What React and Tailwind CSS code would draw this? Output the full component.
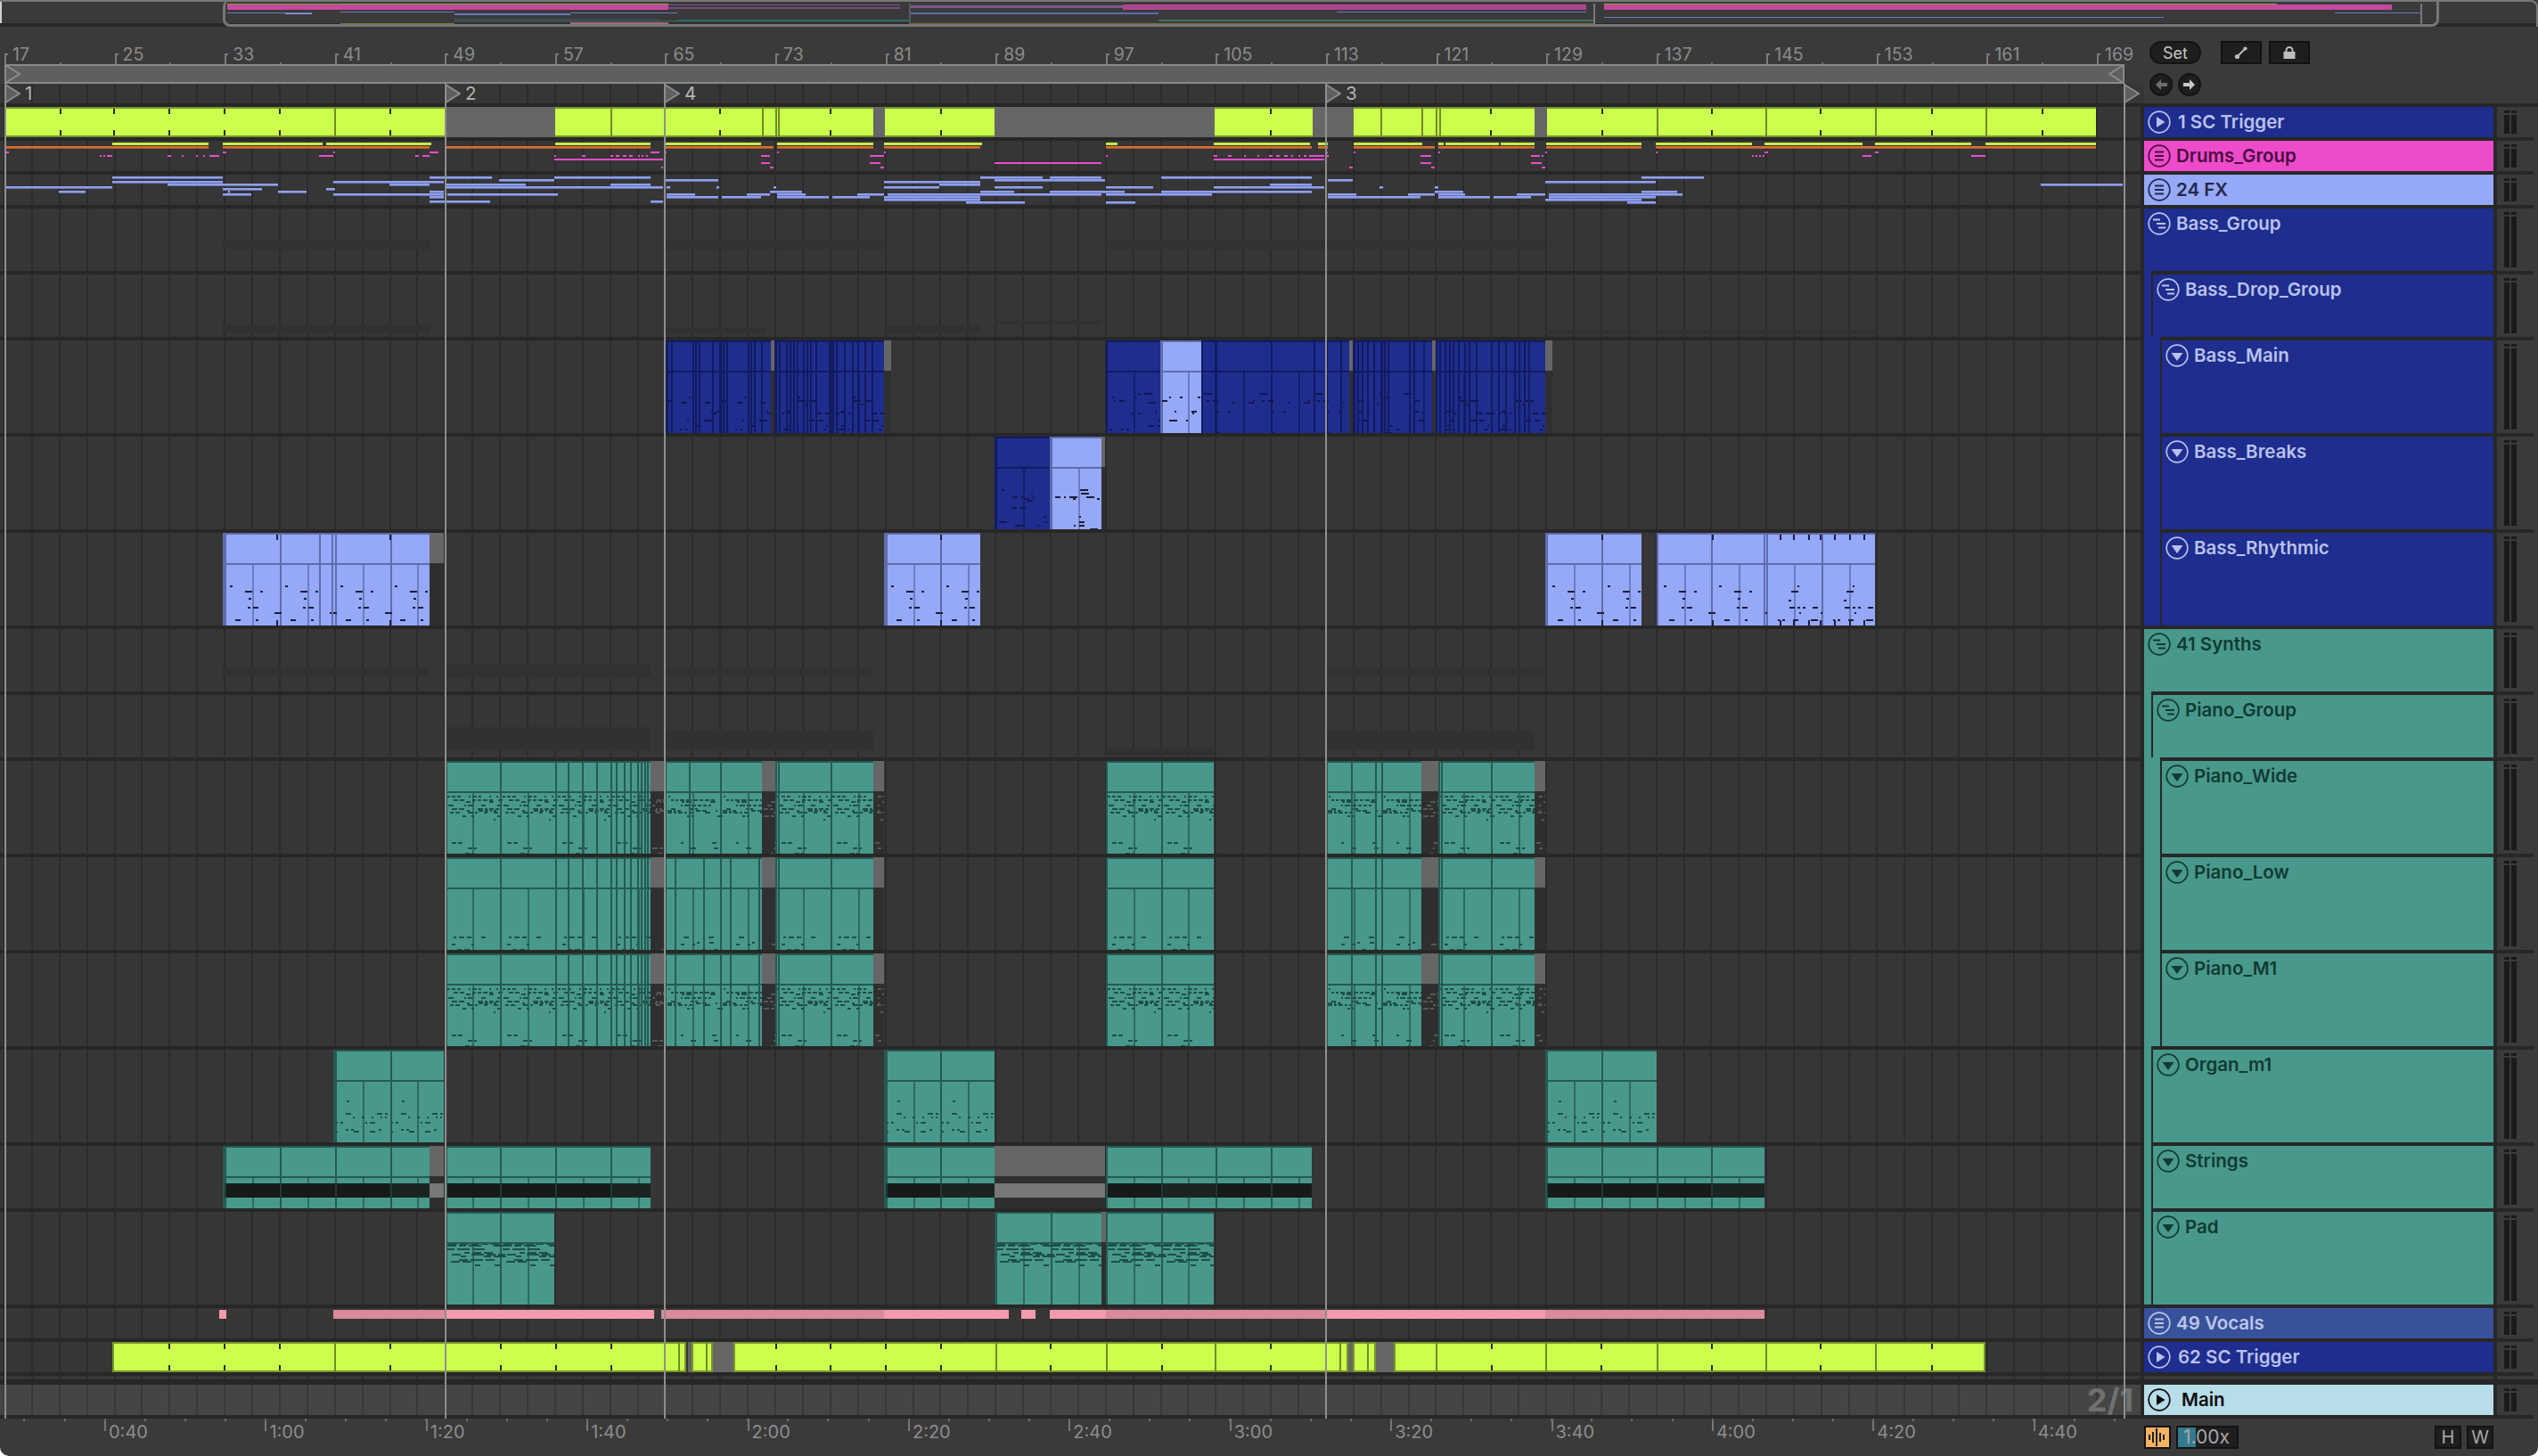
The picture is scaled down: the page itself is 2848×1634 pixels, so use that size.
import React from 'react';

const GRID = 30.894;
const SCH = {
  navy: { bg: 'bg-[#1e2d8e]', line: '#121b60', note: '#12184f' },
  peri: { bg: 'bg-[#96a8f8]', line: '#5f6cad', note: '#1a1e38' },
  teal: { bg: 'bg-[#48998b]', line: '#265a52', note: '#1f4f47' },
  gap: { bg: 'bg-[#2f2f2f]', line: '#3a3a3a', note: '#575757' },
};

const NOTE = {
  piano: { period: 61.8, lens: [2, 4, 6, 3, 5], gap: 2, rows: [[39, .35], [43, .5], [45, .45], [49, .65], [53, .6], [55, .4], [57, .65], [61, .35], [65, .15], [91, .22], [97, .3], [103, .18]] },
  pianoLow: { period: 61.8, lens: [3, 5, 4, 6], gap: 3, rows: [[89, .25], [95, .3], [97, .25], [103, .25]] },
  navy: { period: 61.8, lens: [2, 2, 3, 6, 9], gap: 4, rows: [[59, .08], [63, .1], [67, .25], [69, .1], [71, .12], [79, .2], [81, .1], [89, .25], [95, .16], [99, .18], [103, .1]] },
  peri: { period: 61.8, lens: [2, 2, 3, 8, 6], gap: 3, rows: [[59, .12], [65, .1], [73, .12], [75, .1], [83, .35], [89, .3], [97, .3]] },
  organ: { period: 61.8, lens: [2, 2, 2, 3, 6], gap: 3, rows: [[47, .05], [51, .06], [57, .08], [65, .06], [67, .06], [71, .25], [75, .35], [81, .3], [85, .1], [89, .3], [91, .14]] },
  pad: { period: 61.8, lens: [8, 14, 6, 10], gap: 3, rows: [[35, .6], [37, .5], [41, .7], [45, .3], [47, .7], [49, .3], [53, .7], [55, .45], [59, .22]] },
};

function rand(seed) {
  let s = seed * 9301 + 49297;
  return () => {
    s = (s * 1664525 + 1013904223) % 4294967296;
    return s / 4294967296;
  };
}

function genNotes(kind, seed, w) {
  const cfg = NOTE[kind];
  const r = rand(seed);
  const base = [];
  cfg.rows.forEach(([y, p]) => {
    let x = 2 + Math.floor(r() * 6);
    while (x < cfg.period - 2) {
      const len = cfg.lens[Math.floor(r() * cfg.lens.length)];
      if (r() < p) base.push([x, y, len]);
      x += len + cfg.gap;
    }
  });
  const out = [];
  for (let t = 0; t * cfg.period < w; t++) base.forEach(([x, y, l]) => out.push([Math.round(x + t * cfg.period), y, l]));
  return out;
}

function Clip({ from, to, s, h, lines = [], notes, seed = 1, ticks = [], band, fade = [], headLines = [], head = 34 }) {
  const w = to - from;
  const c = SCH[s];
  const isGap = s === 'gap';
  const gx = [];
  for (let k = Math.ceil((from - 5) / GRID); 5 + k * GRID < to; k++) gx.push([Math.round(5 + k * GRID - from), k]);
  const nts = notes ? genNotes(notes, seed, w) : [];
  return (
    <div className={`absolute top-0 bottom-0 ${c.bg}`} style={{ left: from, width: w }}>
      <svg width={w} height={h} className="absolute inset-0 block" shapeRendering="crispEdges">
        {!isGap && gx.map(([x, k]) => (
          <rect key={k} x={x} y={k % 2 === 0 ? 0 : head} width="2" height={h} fill={c.line} opacity={k % 2 === 0 ? 1 : 0.75} />
        ))}
        {band && <rect x="0" y="42" width={w} height="16" fill={isGap ? '#777777' : '#161a19'} />}
        {band && !isGap && fade.map(([a, b]) => <rect key={a} x={a - from} y="42" width={b - a} height="16" fill="#1a2523" />)}
        {band && !isGap && gx.filter(([, k]) => k % 2 === 0).map(([x, k]) => <rect key={k} x={x} y="42" width="2" height="16" fill="#1f3a35" />)}
        {nts.map(([x, y, l], i) => <rect key={i} x={x} y={y} width={l} height="2" fill={c.note} />)}
        {!isGap && <rect x="0" y="0" width={w} height="2" fill={c.line} />}
        {!isGap && <rect x="0" y="0" width="2" height={h} fill={c.line} />}
        {!isGap && <rect x="0" y={head} width={w} height="2" fill={c.line} />}
        {isGap && <rect x="0" y="0" width={w} height={head} fill="#666666" />}
        {lines.map((x) => <rect key={x} x={x - from} y="0" width="2" height={h} fill={c.line} />)}
        {headLines.map((x) => <rect key={x} x={x - from} y="0" width="2" height={head} fill={c.line} />)}
        {ticks.map((x) => (
          <g key={x}>
            <rect x={x - from} y="2" width="2" height="6" fill="#1a1e38" />
            <rect x={x - from} y={h - 6} width="2" height="6" fill="#1a1e38" />
          </g>
        ))}
      </svg>
    </div>
  );
}

function Lime({ from, to, lines = [], ticks = [], box }) {
  const w = to - from;
  return (
    <div className="absolute top-0 bottom-0 bg-[#ccff4d]" style={{ left: from, width: w }}>
      <svg width={w} height="34" className="absolute inset-0 block" shapeRendering="crispEdges">
        <rect x="0" y="0" width={w} height="2" fill="#76962c" />
        <rect x="0" y="32" width={w} height="2" fill="#76962c" />
        {box && <rect x="0" y="0" width="2" height="34" fill="#76962c" />}
        {box && <rect x={w - 2} y="0" width="2" height="34" fill="#76962c" />}
        {lines.map((x) => <rect key={x} x={x - from} y="0" width="2" height="34" fill="#6f8c29" />)}
        {ticks.map((x) => (
          <g key={x}>
            <rect x={x - from} y="2" width="2" height="6" fill="#2b2b2b" />
            <rect x={x - from} y="26" width="2" height="6" fill="#2b2b2b" />
          </g>
        ))}
      </svg>
    </div>
  );
}

function Gray({ from, to }) {
  return <div className="absolute top-0 bottom-0 bg-[#666666]" style={{ left: from, width: to - from }} />;
}

const DRUM_LIME = [[126, 234], [250, 362], [366, 484], [623, 730], [745, 854], [872, 980], [992, 1102], [1241, 1254], [1362, 1470], [1479, 1490], [1519, 1596], [1614, 1620], [1622, 1682], [1684, 1722], [1735, 1842], [1858, 1966], [1980, 2090], [2104, 2212], [2228, 2352]];
const DRUM_OR = [[5, 234], [250, 482], [500, 730], [745, 868], [872, 980], [992, 1100], [1241, 1472], [1479, 1490], [1519, 1610], [1614, 1722], [1735, 1842], [1858, 2352]];
const DRUM_MAG = [[6, 170, 4], [112, 174, 2], [116, 174, 2], [120, 174, 6], [188, 174, 4], [204, 174, 2], [220, 174, 2], [228, 174, 2], [235, 174, 11], [250, 170, 4], [358, 174, 16], [374, 170, 2], [466, 174, 4], [474, 174, 8], [482, 170, 10], [622, 174, 2], [653, 174, 4], [685, 174, 3], [691, 174, 4], [699, 174, 4], [706, 174, 4], [716, 174, 2], [720, 174, 2], [725, 174, 2], [622, 178, 122], [730, 170, 10], [742, 187, 2], [745, 170, 3], [854, 174, 10], [854, 182, 10], [864, 187, 4], [872, 170, 2], [976, 174, 16], [976, 182, 12], [988, 187, 4], [992, 170, 2], [1116, 182, 120], [1241, 174, 2], [1362, 178, 124], [1362, 174, 4], [1378, 174, 4], [1396, 174, 2], [1411, 174, 2], [1424, 174, 4], [1432, 174, 4], [1441, 174, 4], [1449, 174, 2], [1457, 174, 2], [1463, 174, 3], [1469, 174, 17], [1488, 170, 2], [1488, 174, 3], [1514, 187, 4], [1519, 170, 2], [1594, 174, 12], [1594, 182, 12], [1606, 187, 4], [1614, 170, 2], [1718, 174, 10], [1730, 174, 2], [1718, 182, 12], [1730, 187, 4], [1734, 170, 2], [1858, 170, 2], [1966, 174, 2], [1970, 174, 2], [1974, 174, 2], [1978, 174, 2], [1980, 170, 4], [2090, 174, 10], [2104, 170, 4], [2212, 174, 16]];
const FX = [[6, 126, 209], [66, 96, 214], [126, 250, 198], [126, 250, 203], [188, 250, 206], [250, 312, 206], [250, 294, 211], [256, 258, 214], [250, 282, 217], [312, 344, 214], [366, 376, 211], [374, 498, 203], [437, 482, 206], [374, 498, 217], [482, 552, 198], [560, 622, 201], [500, 590, 206], [500, 744, 209], [622, 730, 198], [685, 730, 206], [482, 498, 214], [482, 498, 220], [502, 626, 217], [482, 550, 225], [730, 744, 225], [745, 806, 201], [748, 752, 209], [804, 807, 209], [868, 871, 209], [748, 780, 217], [748, 806, 220], [810, 854, 220], [838, 864, 217], [864, 900, 214], [872, 904, 217], [872, 930, 220], [934, 976, 220], [962, 992, 217], [992, 1100, 203], [1054, 1100, 206], [992, 1054, 209], [1100, 1170, 198], [1116, 1240, 201], [1178, 1236, 198], [1116, 1170, 209], [1100, 1138, 214], [1178, 1262, 214], [996, 1236, 217], [992, 1100, 220], [992, 1100, 223], [1084, 1150, 226], [1241, 1294, 209], [1241, 1360, 217], [1241, 1274, 226], [1303, 1472, 198], [1303, 1472, 214], [1362, 1486, 209], [1425, 1472, 206], [1490, 1518, 201], [1490, 1522, 217], [1490, 1594, 220], [1548, 1552, 209], [1580, 1610, 217], [1610, 1614, 209], [1610, 1642, 214], [1614, 1644, 217], [1614, 1672, 220], [1676, 1718, 220], [1702, 1734, 217], [1734, 1858, 203], [1842, 1912, 198], [1842, 1882, 214], [1738, 1888, 217], [1738, 1858, 220], [1734, 1842, 223], [1826, 1858, 226], [2290, 2382, 206]];

function DrumLines() {
  return (
    <svg width="2402" height="34" className="absolute inset-0 block" shapeRendering="crispEdges">
      {DRUM_LIME.map(([a, b]) => <rect key={a} x={a} y="2" width={b - a} height="3" fill="#c3f04a" />)}
      {DRUM_OR.map(([a, b]) => <g key={a}><rect x={a} y="6" width={b - a} height="3" fill="#d96e2c" /><rect x={a} y="8" width={b - a} height="1" fill="#a8592c" /></g>)}
      {DRUM_MAG.map(([x, y, w], i) => <rect key={i} x={x} y={y - 158} width={w} height="2" fill="#ee4bcb" />)}
    </svg>
  );
}

function FxLines() {
  return (
    <svg width="2402" height="34" className="absolute inset-0 block" shapeRendering="crispEdges">
      {FX.map(([a, b, y], i) => (
        <g key={i}>
          <rect x={a} y={y - 196} width={b - a} height="2" fill="#8ea0ee" />
          <rect x={a} y={y - 194} width={b - a} height="1" fill="#6a76b6" />
        </g>
      ))}
    </svg>
  );
}

function Ghost({ from, to, top, h }) {
  return <div className="absolute bg-[#313131]" style={{ left: from, width: to - from, top, height: h }} />;
}

function Pink({ from, to, dim }) {
  return <div className={`absolute top-[2px] h-[10px] ${dim ? 'bg-[#d98a9b]' : 'bg-[#f29bac]'}`} style={{ left: from, width: to - from }} />;
}

const P1 = [561, 623, 637, 653, 669, 685, 691, 700, 707, 715, 719, 723, 726];
const pianoClips = (notes, low, seed) => (
  <>
    <Clip from={500} to={730} s="teal" h={104} lines={P1} notes={notes} seed={seed} />
    <Clip from={730} to={746} s="gap" h={104} notes={notes} seed={seed + 1} />
    <Clip from={746} to={855} s="teal" h={104} lines={low ? [757, 789, 819, 851] : [773]} notes={notes} seed={seed + 2} />
    <Clip from={855} to={870} s="gap" h={104} notes={notes} seed={seed + 3} />
    <Clip from={870} to={980} s="teal" h={104} lines={[873]} notes={notes} seed={seed} />
    <Clip from={980} to={992} s="gap" h={104} notes={notes} seed={seed + 4} />
    <Clip from={1241} to={1362} s="teal" h={104} notes={notes} seed={seed} />
    <Clip from={1487} to={1595} s="teal" h={104} lines={[1516, 1543]} notes={notes} seed={seed + 2} />
    <Clip from={1595} to={1614} s="gap" h={104} notes={notes} seed={seed + 3} />
    <Clip from={1614} to={1722} s="teal" h={104} lines={[1617]} notes={notes} seed={seed} />
    <Clip from={1722} to={1734} s="gap" h={104} notes={notes} seed={seed + 4} />
  </>
);

const NAVY_A = [748, 753, 777, 780, 784, 799, 807, 811, 815, 839, 842, 846, 854];
const NAVY_B = [870, 874, 882, 886, 890, 894, 901, 905, 909, 915, 930, 934, 938, 947, 956, 962, 970, 978];
const NAVY_C = [1519, 1523, 1528, 1534, 1541, 1549, 1553, 1557, 1581, 1586, 1597];
const NAVY_D = [1615, 1621, 1626, 1630, 1636, 1643, 1648, 1656, 1673, 1681, 1689, 1699, 1704, 1710, 1715];

const ROWS = [
  { name: '1 SC Trigger', hc: 'h-[38px]', bg: 'bg-[#1e2d8e]', fg: 'text-[#b9c1ec]', icon: 'play', lane: (
    <>
      <Lime from={5} to={499} lines={[375]} ticks={[67, 127, 189, 251, 313, 437]} />
      <Gray from={499} to={623} />
      <Lime from={623} to={980} lines={[685, 855, 870, 873]} ticks={[807, 931]} />
      <Gray from={980} to={993} />
      <Lime from={993} to={1116} ticks={[1055]} />
      <Gray from={1116} to={1363} />
      <Lime from={1363} to={1473} ticks={[1425]} />
      <Gray from={1473} to={1519} />
      <Lime from={1519} to={1722} lines={[1549, 1595, 1611, 1615]} ticks={[1672]} />
      <Gray from={1722} to={1736} />
      <Lime from={1736} to={2352} lines={[1859, 1981, 2104, 2228]} ticks={[1797, 1920, 2042, 2167, 2291]} />
    </>
  ) },
  { name: 'Drums_Group', hc: 'h-[38px]', bg: 'bg-[#ee4bcb]', fg: 'text-[#4a0c3e]', icon: 'lines', lane: <DrumLines /> },
  { name: '24 FX', hc: 'h-[38px]', bg: 'bg-[#96a8f8]', fg: 'text-[#23284a]', icon: 'lines', lane: <FxLines /> },
  { name: 'Bass_Group', hc: 'h-[74px]', bg: 'bg-[#1e2d8e]', fg: 'text-[#b9c1ec]', icon: 'tree', sep: 8, lane: (
    <>
      <Ghost from={250} to={482} top={36} h={10} />
      <Ghost from={746} to={992} top={36} h={10} />
      <Ghost from={1241} to={1734} top={36} h={10} />
    </>
  ) },
  { name: 'Bass_Drop_Group', hc: 'h-[74px]', indent: 8, bg: 'bg-[#1e2d8e]', fg: 'text-[#b9c1ec]', icon: 'tree', sep: 18, lane: (
    <>
      <Ghost from={250} to={482} top={57} h={9} />
      <Ghost from={746} to={860} top={60} h={6} />
      <Ghost from={992} to={1100} top={57} h={9} />
      <Ghost from={1116} to={1236} top={52} h={4} />
      <Ghost from={1734} to={1842} top={62} h={4} />
      <Ghost from={1859} to={2104} top={62} h={4} />
    </>
  ) },
  { name: 'Bass_Main', hc: 'h-[108px]', indent: 18, bg: 'bg-[#1e2d8e]', fg: 'text-[#b9c1ec]', icon: 'down', sep: 18, lane: (
    <>
      <Clip from={746} to={865} s="navy" h={104} lines={NAVY_A} notes="navy" seed={3} />
      <Clip from={865} to={869} s="gap" h={104} />
      <Clip from={869} to={992} s="navy" h={104} lines={NAVY_B} notes="navy" seed={5} />
      <Clip from={992} to={1000} s="gap" h={104} />
      <Clip from={1241} to={1302} s="navy" h={104} notes="navy" seed={9} />
      <Clip from={1302} to={1348} s="peri" h={104} notes="navy" seed={10} />
      <Clip from={1348} to={1514} s="navy" h={104} lines={[1363, 1474, 1504]} notes="navy" seed={13} />
      <Clip from={1514} to={1518} s="gap" h={104} />
      <Clip from={1518} to={1607} s="navy" h={104} lines={NAVY_C} notes="navy" seed={15} />
      <Clip from={1607} to={1611} s="gap" h={104} />
      <Clip from={1611} to={1734} s="navy" h={104} lines={NAVY_D} notes="navy" seed={5} />
      <Clip from={1734} to={1742} s="gap" h={104} />
    </>
  ) },
  { name: 'Bass_Breaks', hc: 'h-[108px]', indent: 18, bg: 'bg-[#1e2d8e]', fg: 'text-[#b9c1ec]', icon: 'down', sep: 18, lane: (
    <>
      <Clip from={1116} to={1178} s="navy" h={104} notes="navy" seed={21} />
      <Clip from={1178} to={1236} s="peri" h={104} notes="navy" seed={23} />
      <Clip from={1236} to={1240} s="gap" h={104} />
    </>
  ) },
  { name: 'Bass_Rhythmic', hc: 'h-[108px]', indent: 18, bg: 'bg-[#1e2d8e]', fg: 'text-[#b9c1ec]', icon: 'down', lane: (
    <>
      <Clip from={250} to={482} s="peri" h={104} lines={[358, 372]} notes="peri" seed={31} ticks={[310, 437]} />
      <Clip from={482} to={498} s="gap" h={104} />
      <Clip from={992} to={1100} s="peri" h={104} notes="peri" seed={31} ticks={[1055]} />
      <Clip from={1734} to={1842} s="peri" h={104} notes="peri" seed={31} ticks={[1797]} />
      <Clip from={1859} to={1979} s="peri" h={104} notes="peri" seed={31} ticks={[1921]} />
      <Clip from={1979} to={2104} s="peri" h={104} notes="peri" seed={37} ticks={[1997, 2012, 2029, 2042, 2058, 2075, 2091]} />
    </>
  ) },
  { name: '41 Synths', hc: 'h-[74px]', bg: 'bg-[#48998b]', fg: 'text-[#123a33]', icon: 'tree', sep: 8, lane: (
    <>
      <Ghost from={250} to={482} top={44} h={8} />
      <Ghost from={499} to={730} top={40} h={14} />
      <Ghost from={746} to={980} top={44} h={8} />
      <Ghost from={1487} to={1734} top={44} h={8} />
    </>
  ) },
  { name: 'Piano_Group', hc: 'h-[74px]', indent: 8, bg: 'bg-[#48998b]', fg: 'text-[#123a33]', icon: 'tree', sep: 18, lane: (
    <>
      <Ghost from={499} to={730} top={36} h={26} />
      <Ghost from={746} to={980} top={40} h={22} />
      <Ghost from={1241} to={1362} top={60} h={8} />
      <Ghost from={1487} to={1722} top={40} h={22} />
    </>
  ) },
  { name: 'Piano_Wide', hc: 'h-[108px]', indent: 18, bg: 'bg-[#48998b]', fg: 'text-[#123a33]', icon: 'down', sep: 18, lane: pianoClips('piano', false, 41) },
  { name: 'Piano_Low', hc: 'h-[108px]', indent: 18, bg: 'bg-[#48998b]', fg: 'text-[#123a33]', icon: 'down', sep: 18, lane: pianoClips('pianoLow', true, 51) },
  { name: 'Piano_M1', hc: 'h-[108px]', indent: 18, bg: 'bg-[#48998b]', fg: 'text-[#123a33]', icon: 'down', sep: 8, lane: pianoClips('piano', true, 41) },
  { name: 'Organ_m1', hc: 'h-[108px]', indent: 8, bg: 'bg-[#48998b]', fg: 'text-[#123a33]', icon: 'down', sep: 8, lane: (
    <>
      <Clip from={374} to={498} s="teal" h={104} notes="organ" seed={61} />
      <Clip from={992} to={1116} s="teal" h={104} notes="organ" seed={61} />
      <Clip from={1734} to={1859} s="teal" h={104} notes="organ" seed={61} />
    </>
  ) },
  { name: 'Strings', hc: 'h-[74px]', indent: 8, bg: 'bg-[#48998b]', fg: 'text-[#123a33]', icon: 'down', sep: 8, lane: (
    <>
      <Clip from={250} to={482} s="teal" h={70} band fade={[[437, 482]]} />
      <Clip from={482} to={498} s="gap" h={70} band />
      <Clip from={500} to={730} s="teal" h={70} band fade={[[686, 730]]} />
      <Clip from={992} to={1116} s="teal" h={70} band fade={[[1055, 1116]]} />
      <Clip from={1116} to={1240} s="gap" h={70} band />
      <Clip from={1241} to={1472} s="teal" h={70} band fade={[[1303, 1363]]} />
      <Clip from={1734} to={1980} s="teal" h={70} band fade={[[1921, 1980]]} />
    </>
  ) },
  { name: 'Pad', hc: 'h-[108px]', indent: 8, bg: 'bg-[#48998b]', fg: 'text-[#123a33]', icon: 'down', lane: (
    <>
      <Clip from={500} to={622} s="teal" h={104} notes="pad" seed={71} />
      <Clip from={1116} to={1236} s="teal" h={104} notes="pad" seed={71} />
      <Clip from={1236} to={1241} s="gap" h={104} />
      <Clip from={1241} to={1362} s="teal" h={104} notes="pad" seed={71} />
    </>
  ) },
  { name: '49 Vocals', hc: 'h-[38px]', bg: 'bg-[#38519b]', fg: 'text-[#bcc6e8]', icon: 'lines', lane: (
    <>
      <Pink from={246} to={254} />
      <Pink from={374} to={499} dim />
      <Pink from={499} to={734} />
      <Pink from={742} to={992} dim />
      <Pink from={992} to={1132} />
      <Pink from={1146} to={1162} />
      <Pink from={1178} to={1241} />
      <Pink from={1241} to={1487} dim />
      <Pink from={1487} to={1734} />
      <Pink from={1734} to={1980} dim />
    </>
  ) },
  { name: '62 SC Trigger', hc: 'h-[38px]', bg: 'bg-[#1e2d8e]', fg: 'text-[#b9c1ec]', icon: 'play', lane: (
    <>
      <Lime box from={126} to={770} lines={[375, 499, 761]} ticks={[189, 251, 313, 437, 561, 623, 685]} />
      <Gray from={772} to={776} />
      <Lime box from={776} to={800} lines={[792]} />
      <Gray from={800} to={823} />
      <Lime box from={823} to={1513} lines={[1117, 1241, 1363, 1503]} ticks={[870, 931, 993, 1055, 1178, 1303, 1425]} />
      <Gray from={1513} to={1518} />
      <Lime box from={1518} to={1544} lines={[1534]} />
      <Gray from={1544} to={1564} />
      <Lime box from={1564} to={2228} lines={[1611, 1734, 1859, 1981, 2104]} ticks={[1673, 1796, 1920, 2042, 2167]} />
    </>
  ) },
];

function TrackIcon({ type }) {
  return (
    <svg width="26" height="26" viewBox="0 0 26 26" className="shrink-0" fill="none">
      <circle cx="13" cy="13" r="11.8" stroke="currentColor" strokeWidth="1.7" />
      {type === 'play' && <polygon points="10,7 10,19 19.5,13" fill="currentColor" />}
      {type === 'down' && <polygon points="6.5,10 19.5,10 13,19" fill="currentColor" />}
      {type === 'lines' && <path d="M8 8.5H18M8 13H18M8 17.5H18" stroke="currentColor" strokeWidth="2.2" />}
      {type === 'tree' && <path d="M6 8.5H14M10 13H20M12 17.5H20" stroke="currentColor" strokeWidth="2.2" />}
    </svg>
  );
}

function Meter() {
  return (
    <div className="flex gap-[2px] pl-[8px] h-full py-1 bg-[#3a3a3a]">
      {[0, 1].map((i) => (
        <div key={i} className="w-[6px] flex flex-col gap-[2px]">
          <div className="h-[3px] bg-[#1a1a1a]" />
          <div className="flex-1 bg-[#1a1a1a]" />
        </div>
      ))}
    </div>
  );
}

const LANE = 'bg-[repeating-linear-gradient(90deg,#363636_0px,#363636_4px,#2b2b2b_4px,#2b2b2b_6px,#363636_6px,#363636_30.894px)]';
const LANE_MAIN = 'bg-[repeating-linear-gradient(90deg,#454545_0px,#454545_4px,#383838_4px,#383838_6px,#454545_6px,#454545_30.894px)]';

function TrackRow({ r }) {
  const indent = r.indent || 0;
  const sep = r.sep || 0;
  return (
    <div className={`flex shrink-0 ${r.hc} bg-[#272727]`}>
      <div className={`w-[2402px] mb-1 relative ${LANE}`}>{r.lane}</div>
      <div className="w-[392px] ml-1 flex flex-col">
        <div className="flex flex-1 min-h-0">
          {indent > 0 && <div className={`${r.bg} border-r-2 border-[#272727] box-content`} style={{ width: indent }} />}
          <div className={`flex-1 ${r.bg} ${r.fg} flex items-start pl-1 pt-1 gap-[6px]`}>
            <TrackIcon type={r.icon} />
            <span className={`text-[20.5px] leading-[26px] font-semibold ${r.icon === 'play' ? 'ml-[2px]' : ''}`}>{r.name}</span>
          </div>
        </div>
        <div className="h-1 shrink-0">
          {sep > 0 && <div className={`h-full ${r.bg}`} style={{ width: sep }} />}
        </div>
      </div>
      <div className="w-[41px] ml-1 mb-1"><Meter /></div>
      <div className="w-[5px] bg-[#3a3a3a]" />
    </div>
  );
}

const BARS = Array.from({ length: 20 }, (_, i) => 17 + i * 8);
const TIMES = ['0:40', '1:00', '1:20', '1:40', '2:00', '2:20', '2:40', '3:00', '3:20', '3:40', '4:00', '4:20', '4:40'];

function Ruler() {
  return (
    <div className="h-[42px] flex items-end pl-[5px]">
      {BARS.map((b) => (
        <div key={b} className="w-[123.58px] shrink-0 h-[24px] flex items-end relative">
          <div className="w-[4px] h-[12px] border-l-2 border-t-2 border-[#7b7b7b] shrink-0" />
          <span className="ml-[5px] mb-[-1px] text-[19.5px] leading-[24px] text-[#8c8c8c]">{b}</span>
          {b < 169 && <div className="absolute left-[61.8px] bottom-0 w-[2px] h-[2px] bg-[#6f6f6f]" />}
        </div>
      ))}
    </div>
  );
}

function Tri({ x, flip, top = 0 }) {
  return (
    <svg width="18" height="22" viewBox="0 0 18 22" className="absolute" style={{ left: flip ? x - 17 : x, top }}>
      <polygon points={flip ? '17,1 1,11 17,21' : '1,1 17,11 1,21'} fill="#5f5f5f" stroke="#8b8b8b" strokeWidth="2" />
    </svg>
  );
}

function Overview() {
  const segs = [
    [255, 750, 3, 6, '#c4499f'], [255, 494, 2, 1, '#7c9a35'], [382, 750, 2, 1, '#8da63b'], [750, 1010, 3, 1, '#8a4f86'], [750, 1010, 6, 2, '#6e4f80'], [1020, 1260, 4, 3, '#7a5a8c'], [1260, 1780, 3, 6, '#b0468f'], [1800, 2684, 3, 6, '#c4499f'], [1800, 2555, 2, 1, '#8da63b'],
    [255, 350, 12, 1, '#6b78b8'], [320, 350, 13, 1, '#8fa0e8'], [382, 510, 11, 1, '#6b78b8'], [510, 640, 13, 2, '#6b78b8'], [640, 760, 12, 1, '#6b78b8'], [1020, 1300, 12, 2, '#5e6aa8'], [1500, 1780, 11, 1, '#6b78b8'], [2620, 2716, 12, 1, '#6b78b8'], [1800, 2428, 17, 1, '#6b78b8'],
    [510, 740, 19, 1, '#3f4b6e'], [510, 760, 21, 1, '#3a6a62'], [640, 750, 23, 2, '#a56a78'], [382, 510, 24, 1, '#7c7a35'], [760, 1020, 20, 2, '#2f6a62'], [1300, 1790, 20, 2, '#3a7066'], [1800, 2555, 25, 1, '#8a9a35'], [1020, 1790, 24, 1, '#7a6a3a'],
  ];
  return (
    <div className="h-[30px] shrink-0 relative bg-[#3a3a3a] rounded-tr-[8px] border-t-2 border-r-2 border-[#777777]">
      <div className="absolute left-0 right-0 bottom-0 h-[4px] bg-[#292929]" />
      <div className="absolute left-0 top-0 w-[2px] h-[24px] bg-[#d0d0d0]" />
      <svg width="2848" height="28" className="absolute left-0 top-0" shapeRendering="crispEdges">
        {segs.map(([a, b, y, h, c], i) => <rect key={i} x={a} y={y} width={b - a} height={h} fill={c} />)}
        <rect x="1020" y="2" width="2" height="24" fill="#5a5a5a" />
        <rect x="1788" y="2" width="2" height="24" fill="#7a7a7a" />
        <rect x="2716" y="2" width="2" height="24" fill="#777777" />
      </svg>
      <div className="absolute left-[250px] w-[2487px] top-[-2px] h-[30px] rounded-b-[8px] rounded-l-[8px] border-[3px] border-t-0 border-[#777777]" />
    </div>
  );
}

function Waveform() {
  return (
    <svg width="22" height="20" viewBox="0 0 22 20" shapeRendering="crispEdges">
      {[[1, 7, 6], [5, 4, 12], [9, 0, 20], [13, 5, 10], [17, 7, 6]].map(([x, y, h]) => <rect key={x} x={x} y={y} width="2" height={h} fill="#1c1c1c" />)}
    </svg>
  );
}

export default function App() {
  return (
    <div className="w-[2848px] h-[1634px] bg-[#3a3a3a] flex flex-col overflow-hidden rounded-b-[10px] font-['Inter','Liberation_Sans',sans-serif] relative">
      <Overview />
      <div className="flex h-[86px] shrink-0">
        <div className="w-[2406px] shrink-0 relative flex flex-col">
          <Ruler />
          <div className="h-[22px] pl-[5px] pr-[23px] relative">
            <div className="h-full bg-[#5f5f5f] border-y-2 border-[#8a8a8a]" />
            <Tri x={5} />
            <Tri x={2383} flip />
          </div>
          <div className={`h-[22px] relative ${LANE}`}>
            {[[5, '1', 28], [499, '2', 522], [745, '4', 768], [1487, '3', 1510]].map(([x, t, lx]) => (
              <React.Fragment key={t}>
                <Tri x={x} />
                <span className="absolute top-0 text-[20.5px] leading-[22px] text-[#b4b4b4]" style={{ left: lx }}>{t}</span>
              </React.Fragment>
            ))}
            <Tri x={2383} />
          </div>
        </div>
        <div className="flex-1 flex flex-col pl-[6px] pt-[16px]">
          <div className="flex items-center gap-[22px] h-[26px]">
            <div className="w-[58px] h-[26px] rounded-full bg-[#1e1e1e] border-2 border-[#131313] flex items-center justify-center text-[18px] text-[#c8c8c8]">Set</div>
            <div className="flex gap-[8px]">
              <div className="w-[46px] h-[26px] bg-[#1e1e1e] border-2 border-[#111111] flex items-center justify-center">
                <svg width="16" height="16" viewBox="0 0 16 16"><path d="M4 12L12 4" stroke="#bdbdbd" strokeWidth="2" /><circle cx="3.5" cy="12.5" r="2.6" fill="#bdbdbd" /><circle cx="12.5" cy="3.5" r="2.1" fill="#bdbdbd" /></svg>
              </div>
              <div className="w-[46px] h-[26px] bg-[#1e1e1e] border-2 border-[#111111] flex items-center justify-center">
                <svg width="16" height="16" viewBox="0 0 16 16"><path d="M4.5 8V5.5a3.5 3.5 0 0 1 7 0V8" stroke="#bdbdbd" strokeWidth="2" fill="none" /><rect x="1.5" y="7" width="13" height="8" fill="#bdbdbd" /></svg>
              </div>
            </div>
          </div>
          <div className="flex gap-[6px] mt-[10px]">
            <div className="w-[26px] h-[26px] rounded-full bg-[#1e1e1e] border-2 border-[#131313] flex items-center justify-center">
              <svg width="16" height="14" viewBox="0 0 16 14"><path d="M8 1L2 7l6 6V9h7V5H8z" fill="#6e6e6e" /></svg>
            </div>
            <div className="w-[26px] h-[26px] rounded-full bg-[#1e1e1e] border-2 border-[#131313] flex items-center justify-center">
              <svg width="16" height="14" viewBox="0 0 16 14"><path d="M8 1l6 6-6 6V9H1V5h7z" fill="#c8c8c8" /></svg>
            </div>
          </div>
        </div>
      </div>

      <div className="flex flex-col h-[1476px] shrink-0">
        <div className="h-1 shrink-0 bg-[#272727]" />
        {ROWS.map((r) => <TrackRow key={r.name} r={r} />)}
        <div className="flex h-[4px] shrink-0">
          <div className={`w-[2402px] ${LANE}`} />
          <div className="w-[4px] bg-[#272727]" />
          <div className="w-[392px] bg-[#3a3a3a]" />
          <div className="w-[4px] bg-[#272727]" />
          <div className="flex-1 bg-[#3a3a3a]" />
        </div>
        <div className="h-[6px] shrink-0 bg-[#272727]" />
        <div className="flex h-[38px] shrink-0 bg-[#272727]">
          <div className={`w-[2402px] mb-1 flex items-center justify-end pr-[8px] ${LANE_MAIN}`}>
            <span className="text-[36px] leading-[34px] font-bold text-[#707070]">2/1</span>
          </div>
          <div className="w-[392px] ml-1 mb-1 bg-[#b7dde9] text-[#0c0c0c] flex items-start pl-1 pt-1 gap-[12px]">
            <TrackIcon type="play" />
            <span className="text-[20.5px] leading-[26px] font-semibold">Main</span>
          </div>
          <div className="w-[41px] ml-1 mb-1"><Meter /></div>
          <div className="w-[5px] bg-[#3a3a3a]" />
        </div>
      </div>

      <div className="h-[42px] shrink-0 flex relative">
        <div className="absolute left-0 top-0 w-[2400px] h-[3px] bg-[repeating-linear-gradient(90deg,transparent_0px,transparent_26.5px,#6a6a6a_26.5px,#6a6a6a_28.5px,transparent_28.5px,transparent_45.1px)]" />
        <div className="w-[2406px] shrink-0 flex pl-[117px] overflow-hidden">
          {TIMES.map((t) => (
            <div key={t} className="w-[180.4px] shrink-0 flex items-start">
              <div className="w-[2px] h-[14px] bg-[#777777] shrink-0" />
              <span className="ml-[3px] mt-[4px] text-[20px] leading-[22px] text-[#8d8d8d]">{t}</span>
            </div>
          ))}
        </div>
        <div className="flex-1 flex items-start pt-[8px] pr-[50px] gap-[6px]">
          <div className="w-[30px] h-[26px] bg-[#f5b261] border-2 border-[#131313] flex items-center justify-center"><Waveform /></div>
          <div className="w-[70px] h-[26px] bg-[#1e1e1e] border-2 border-[#131313] relative flex items-center pl-[6px] text-[21px] text-[#a8a8a8]">
            <div className="absolute left-0 top-0 bottom-0 w-[20px] bg-[#337a8f]" />
            <span className="relative">1.00x</span>
          </div>
          <div className="ml-auto w-[30px] h-[26px] bg-[#1e1e1e] border-2 border-[#131313] flex items-center justify-center text-[20px] text-[#a8a8a8]">H</div>
          <div className="w-[30px] h-[26px] bg-[#1e1e1e] border-2 border-[#131313] flex items-center justify-center text-[20px] text-[#a8a8a8]">W</div>
        </div>
      </div>

      {[5, 499, 745, 1487, 2383].map((x) => (
        <div key={x} className="absolute top-[94px] h-[1498px] w-[2px] bg-[#8f8f8f]" style={{ left: x }} />
      ))}
    </div>
  );
}
